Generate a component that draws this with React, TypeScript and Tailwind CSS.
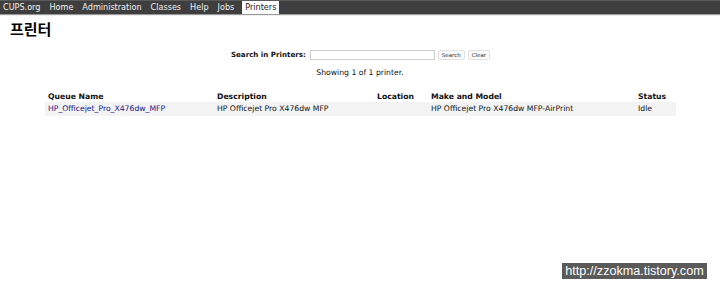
export default function App() {
  const nav = ["CUPS.org", "Home", "Administration", "Classes", "Help", "Jobs"];
  return (
    <div className="relative h-[289px] w-[720px] overflow-hidden bg-white font-['DejaVu_Sans',sans-serif] text-[#111]">
      <div className="flex h-[14px] items-center gap-[9px] border-t border-[#5a5a5a] bg-[#3e3e3e] pl-[3px] text-[8.1px] leading-none text-[#f2f2f2] shadow-[0_1px_1px_#9a9a9a]">
        {nav.map((n) => (
          <span key={n}>{n}</span>
        ))}
        <span className="-mx-[1px] flex h-[13px] items-center bg-white px-[3px] text-[#222]">Printers</span>
      </div>

      <h1 className="ml-[10px] mt-[5px] font-['Noto_Sans_CJK_KR',sans-serif] text-[15px] font-bold leading-[20px] text-black">
        프린터
      </h1>

      <div className="mt-[11px] flex items-center justify-center gap-[3px] pl-[1px] text-[7.7px]">
        <span className="text-[7.1px] font-bold">Search in Printers:</span>
        <div className="ml-[1px] h-[10px] w-[125px] border border-[#cfcfcf] bg-white" />
        <span className="flex h-[10px] items-center rounded-[2px] border border-[#e2e2e2] bg-[#fafafa] px-[3px] text-[5.5px] text-[#333]">Search</span>
        <span className="flex h-[10px] items-center rounded-[2px] border border-[#e2e2e2] bg-[#fafafa] px-[3px] text-[5.5px] text-[#333]">Clear</span>
      </div>

      <div className="mt-[7px] text-center text-[7.7px] leading-[10px]">Showing 1 of 1 printer.</div>

      <div className="ml-[45px] mt-[14px] grid w-[631px] grid-cols-[169px_160px_54px_207px_41px] text-[7.7px] leading-[10px]">
        <div className="px-[3px] font-bold">Queue Name</div>
        <div className="px-[3px] font-bold">Description</div>
        <div className="px-[3px] font-bold">Location</div>
        <div className="px-[3px] font-bold">Make and Model</div>
        <div className="px-[3px] font-bold">Status</div>
        <div className="bg-[#f3f3f3] px-[3px] py-[2px] text-[#13138a]">HP_Officejet_Pro_X476dw_MFP</div>
        <div className="bg-[#f3f3f3] px-[3px] py-[2px]">HP Officejet Pro X476dw MFP</div>
        <div className="bg-[#f3f3f3] px-[3px] py-[2px]"></div>
        <div className="bg-[#f3f3f3] px-[3px] py-[2px]">HP Officejet Pro X476dw MFP-AirPrint</div>
        <div className="bg-[#f3f3f3] px-[3px] py-[2px]">Idle</div>
      </div>

      <div className="absolute left-[562px] top-[263px] flex h-[16px] w-[145px] items-center justify-center bg-[#5a5a5a] font-['Liberation_Sans',sans-serif] text-[12.6px] text-white">
        http://zzokma.tistory.com
      </div>
    </div>
  );
}
